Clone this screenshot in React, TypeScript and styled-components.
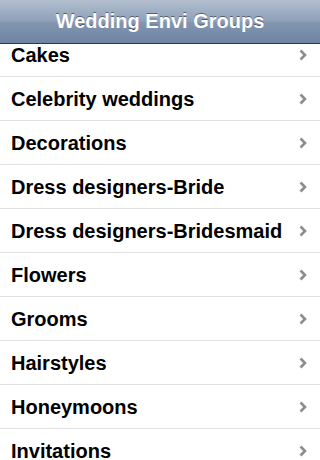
import styled, { createGlobalStyle } from "styled-components";

const groups = [
  "Cakes",
  "Celebrity weddings",
  "Decorations",
  "Dress designers-Bride",
  "Dress designers-Bridesmaid",
  "Flowers",
  "Grooms",
  "Hairstyles",
  "Honeymoons",
  "Invitations",
  "Jewelry",
];

const GlobalStyle = createGlobalStyle`
  html, body {
    margin: 0;
    padding: 0;
    background: #ffffff;
  }
  body {
    font-family: "Liberation Sans", Arial, sans-serif;
  }
`;

const Chevron = () => (
  <svg width="8" height="12" viewBox="0 0 8 12">
    <path d="M1.5 1.5 L6 6 L1.5 10.5" fill="none" stroke="#8c8c8c" strokeWidth="2.6" />
  </svg>
);

const App = () => {
  return (
    <Screen>
      <GlobalStyle />
      <NavBar>
        <Title>Wedding Envi Groups</Title>
      </NavBar>
      <List>
        {groups.map((name) => (
          <Row key={name}>
            <Label>{name}</Label>
            <Chevron />
          </Row>
        ))}
      </List>
    </Screen>
  );
};

const Screen = styled.div`
  width: 320px;
  height: 460px;
  overflow: hidden;
  background: #ffffff;
`;

const NavBar = styled.div`
  position: relative;
  z-index: 1;
  height: 43px;
  border-bottom: 1px solid #2d3642;
  background: linear-gradient(to bottom, #b3bfcf 0%, #8d9fb8 50%, #8396b0 51%, #6e84a2 100%);
  display: flex;
  align-items: center;
  justify-content: center;
`;

const Title = styled.h1`
  margin: 0;
  font-size: 20px;
  font-weight: bold;
  color: #ffffff;
  text-shadow: 0 -1px 0 rgba(0, 0, 0, 0.45);
`;

const List = styled.ul`
  list-style: none;
  margin: -11px 0 0;
  padding: 0;
`;

const Row = styled.li`
  height: 43px;
  border-bottom: 1px solid #e0e0e0;
  display: flex;
  align-items: center;
  justify-content: space-between;
  padding: 1px 13px 0 11px;
  box-sizing: border-box;
  height: 44px;
`;

const Label = styled.span`
  font-size: 20px;
  font-weight: bold;
  color: #000000;
`;

export default App;
